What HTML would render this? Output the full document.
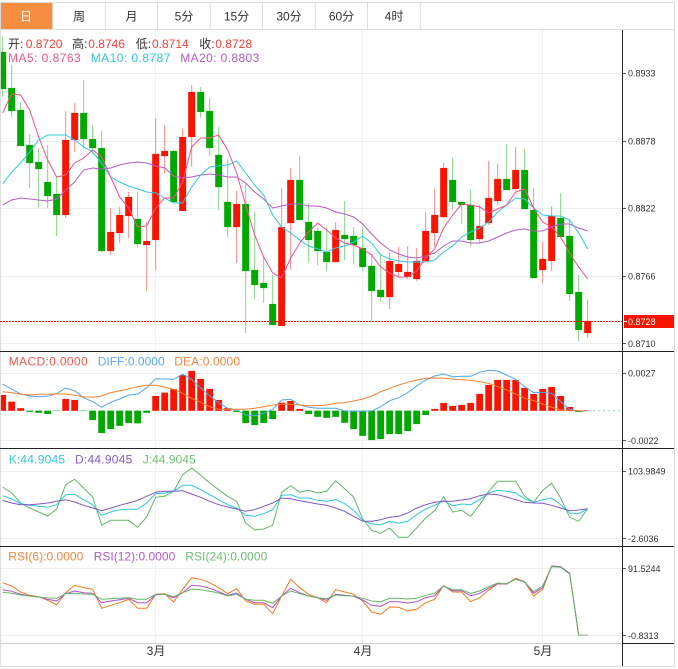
<!DOCTYPE html>
<html><head><meta charset="utf-8">
<style>
html,body{margin:0;padding:0;background:#fff;width:678px;height:669px;overflow:hidden}
svg{display:block;position:absolute;left:0;top:0}
text{font-family:"Liberation Sans","Noto Sans CJK SC",sans-serif}
.l{font-size:12px}.a{font-size:9px;fill:#333}.t{font-size:12px;fill:#333;text-anchor:middle}
</style></head><body>
<svg id="s" width="678" height="669" viewBox="0 0 678 669" xmlns="http://www.w3.org/2000/svg">
<rect x="0" y="2" width="52.5" height="27" fill="#f58e40"/>
<path d="M0 2.5H674.5V666.5H0.5V2M0 29.5H674.5M52.7 3V29M105.3 3V29M157.5 3V29M210.3 3V29M262.5 3V29M315.3 3V29M367.5 3V29M420.3 3V29" fill="none" stroke="#dcdcdc" stroke-width="1"/>
<text class="t" x="26" y="20.5" style="fill:#fff">日</text>
<text class="t" x="79" y="20.5">周</text>
<text class="t" x="131.5" y="20.5">月</text>
<text class="t" x="184" y="20.5">5分</text>
<text class="t" x="236.5" y="20.5">15分</text>
<text class="t" x="289" y="20.5">30分</text>
<text class="t" x="341.5" y="20.5">60分</text>
<text class="t" x="394" y="20.5">4时</text>
<path d="M1 73.5H622M1 141.5H622M1 208.5H622M1 276.5H622M1 343.5H622M1 373.5H622M1 440.5H622M1 471.5H622M1 538.5H622M1 568.5H622M1 635.5H622" stroke="#e9eef2" stroke-width="1" fill="none"/>
<path d="M155.5 30V643M362.5 30V643M542.5 30V643" stroke="#eef2f5" stroke-width="1" fill="none"/>
<g id="g"></g>
<path d="M0 321.5H622" stroke="#f71400" stroke-width="1" stroke-dasharray="2 1" fill="none"/>
<path d="M1 643.5H622" stroke="#cfcfcf" stroke-width="1" fill="none"/>
<path d="M0 351.5H674M0 448.5H674M0 546.5H674M622 643.5H674M622.5 30V666" stroke="#222" stroke-width="1" fill="none"/>
<path d="M623 73.5H626M623 141.5H626M623 208.5H626M623 276.5H626M623 343.5H626M623 373.5H626M623 440.5H626M623 471.5H626M623 538.5H626M623 568.5H626M623 635.5H626" stroke="#555" stroke-width="1" fill="none"/>
<rect x="624" y="315" width="50" height="13" fill="#f71400"/>
<path d="M624 321.5H627" stroke="#fff" stroke-width="1"/>
<text class="a" x="628" y="76.5">0.8933</text>
<text class="a" x="628" y="144.5">0.8878</text>
<text class="a" x="628" y="211.5">0.8822</text>
<text class="a" x="628" y="279.5">0.8766</text>
<text class="a" x="628" y="325" style="fill:#fff">0.8728</text>
<text class="a" x="628" y="347">0.8710</text>
<text class="a" x="628" y="376.5">0.0027</text>
<text class="a" x="628" y="444">-0.0022</text>
<text class="a" x="628" y="474.5">103.9849</text>
<text class="a" x="628" y="542">-2.6036</text>
<text class="a" x="628" y="572">91.5244</text>
<text class="a" x="628" y="639">-0.8313</text>
<text class="l" x="8" y="48" fill="#333">开:</text><text class="l" x="25.7" y="48" fill="#f0403a">0.8720</text>
<text class="l" x="72" y="48" fill="#333">高:</text><text class="l" x="88.3" y="48" fill="#f0403a">0.8746</text>
<text class="l" x="135.7" y="48" fill="#333">低:</text><text class="l" x="152" y="48" fill="#f0403a">0.8714</text>
<text class="l" x="199.3" y="48" fill="#333">收:</text><text class="l" x="215.3" y="48" fill="#f0403a">0.8728</text>
<text class="l" x="8" y="62" fill="#f0568f" textLength="72.7">MA5: 0.8763</text>
<text class="l" x="90.7" y="62" fill="#2ec8dc" textLength="79.7">MA10: 0.8787</text>
<text class="l" x="180.3" y="62" fill="#b05cc8" textLength="79">MA20: 0.8803</text>
<text class="l" x="8.7" y="365.5" fill="#f4574d" textLength="79">MACD:0.0000</text>
<text class="l" x="97.7" y="365.5" fill="#5aa9ee" textLength="67">DIFF:0.0000</text>
<text class="l" x="174.3" y="365.5" fill="#f5843c" textLength="65.7">DEA:0.0000</text>
<text class="l" x="8.7" y="463.5" fill="#2ec8dc" textLength="56.3">K:44.9045</text>
<text class="l" x="75" y="463.5" fill="#8a5cc8" textLength="57.3">D:44.9045</text>
<text class="l" x="142.7" y="463.5" fill="#6fbf73" textLength="53">J:44.9045</text>
<text class="l" x="8.3" y="560.5" fill="#f5843c" textLength="75">RSI(6):0.0000</text>
<text class="l" x="93.7" y="560.5" fill="#b05cc8" textLength="81.6">RSI(12):0.0000</text>
<text class="l" x="185.3" y="560.5" fill="#6fbf73" textLength="82">RSI(24):0.0000</text>
<text class="t" x="156" y="655">3月</text>
<text class="t" x="363" y="655">4月</text>
<text class="t" x="543" y="655">5月</text>
</svg>
<script>
var C=[[36,52,89,97,0],[65,88,111,117,0],[102,110,146,146,0],[134,145,163,188,0],[148,162,169,207,0],[145,182,196,208,0],[177,194,215,236,0],[111,140,215,218,1],[103,113,140,152,1],[80,113,139,148,0],[125,139,148,155,0],[131,148,251,252,0],[208,232,251,255,1],[207,215,233,243,1],[192,197,216,238,1],[192,219,244,248,0],[222,241,245,291,1],[118,154,240,270,1],[125,151,156,173,1],[150,151,202,202,0],[129,137,211,211,1],[85,92,137,167,1],[87,92,112,118,0],[98,111,148,156,0],[127,155,187,210,0],[159,202,227,237,0],[191,204,227,263,1],[183,204,271,333,0],[212,270,285,299,0],[257,283,288,303,0],[275,304,325,325,0],[188,227,326,326,1],[168,180,223,270,1],[156,180,220,220,0],[203,222,240,263,0],[228,231,251,265,0],[227,252,262,271,0],[222,230,262,262,1],[201,235,239,260,0],[227,236,245,264,0],[227,248,267,271,0],[254,266,291,321,0],[253,290,297,302,0],[253,261,297,309,1],[247,264,272,277,1],[246,272,277,279,1],[248,261,279,281,1],[212,231,261,261,1],[189,215,233,247,1],[163,168,217,218,1],[158,180,202,210,0],[202,202,205,224,0],[190,205,240,246,0],[205,226,239,243,1],[161,198,223,225,1],[164,179,201,205,1],[144,179,190,190,0],[147,170,189,191,1],[149,170,209,209,0],[188,210,278,278,0],[242,259,270,283,1],[206,216,261,271,1],[193,218,237,237,0],[219,236,294,301,0],[275,292,330,341,0],[300,321,333,338,1]];
var ma5=[113,94,95,110,137,160,177,175,163,158,150,157,177,197,208,227,226,208,198,198,182,147,138,138,135,150,173,205,235,257,273,278,258,243,232,223,230,238,243,245,249,255,267,273,277,277,271,258,249,228,215,204,205,207,213,209,205,192,189,208,222,227,237,253,267,279];
var ma10=[184,172,163,152,140,135,135,135,140,147,152,163,177,182,186,189,192,193,198,203,203,187,175,167,166,165,161,173,185,195,215,227,233,240,246,249,252,248,246,242,236,243,255,259,261,262,262,262,260,252,246,237,232,228,222,212,205,198,199,208,215,216,216,220,233,249];
var ma20=[205,200,198,199,200,201,199,190,182,170,168,169,168,165,163,162,163,166,168,176,178,177,175,174,175,177,177,183,192,199,208,206,204,204,206,206,208,212,214,217,224,234,243,250,254,257,258,256,253,246,241,241,243,243,241,237,233,230,229,231,231,227,224,224,228,231];
var bars=[395,401.7,408.3,411.7,412.7,414,411,399,400,411,420,433,429,425.7,423,423.3,412.7,396,392.7,389.3,375,371,379,389,400,408,412,423,425,423,419,402.7,401,409,414,416.7,417.7,416.7,422.7,429,435.7,440,439,434,434,431,424,415,409,403,406,405,403,394,385,380,380,380,388,394,389,387,396,407,412,410.7];
var diff=[384,389,394,396,396.7,396.3,393.7,388,390.7,397.7,401.7,407.3,402.3,399,395,394,387.7,378.7,379,379.3,374.3,379.3,387.7,395.7,402.7,408.3,410,415,415.7,413.3,409.3,400,399.3,405,407.3,408.3,408.3,408.3,411,411.3,411.3,411,406.7,400.7,397.7,392.7,386,380,376,374,376.7,376.3,376.3,372.3,370.3,371,375,379.3,386.7,392.7,392.3,393.3,401.7,409.3,411.3,410.7];
var dea=[391.7,392.7,394.3,395,394.3,394.3,394,394,395.3,396.7,397.3,396,392.7,390.7,389,386.7,385.3,385.3,387.3,389.3,393.3,398.3,402.3,406.7,409.3,409.3,409.3,409.3,408.3,406.7,405,404.3,404.3,405,405.7,405.7,405,403.3,402.7,401,399,396,391.7,388.3,385,382.3,380,378.3,378,378.3,379,379.7,380.3,381.7,383.3,386.7,390,394,398.3,400.7,404,407.3,410,410.7,410.7,410.7];
var J=[487,493,503,508,512,516,509,484.7,479.3,488,497,525.3,520.3,520.3,520.3,527.3,517,497.3,496.3,491.3,474.7,468,475.3,483,489.7,496.3,501.3,523,530,529,525.3,492.3,485.7,492.3,490.3,493,491.3,480.7,488.7,497,519,530.3,533.3,528,537.3,537.3,528,518,510.7,496.7,512,510.3,516.3,504.7,491.3,481.3,481.3,481.3,496.3,502.3,490.3,483.3,498,517.3,521.3,508.7];
var K=[495.7,499,503.7,505.3,506.3,507.3,504.7,494.7,494.3,499.7,504.7,515.3,512,509.7,509.3,509.3,503,493.7,493,491.3,485.3,485.3,489.7,494.7,499.7,504.7,508,515.3,516.3,513.7,509.7,495.3,494.7,498,498,500.3,501.3,499.7,503.7,510.3,520.3,524,524.7,521.3,523.3,521.3,514.7,509,505.3,500.7,505.7,504,504.7,499.7,493,490.3,491.3,493,498.7,502.3,499.7,498,504.7,513,513.7,508.7];
var D=[500.3,503,504.7,504.7,504,503,501.3,499.7,502,505.3,508,510.7,508,505.3,503,500.3,496.3,492.3,491.3,491.3,490.7,494,497.3,501.3,504.7,507,509,511.3,509.7,506.3,503,498,498.7,500.7,502.3,504,505.3,508,511.3,516.3,521.3,521.3,519.7,517.3,516.3,513,508,504.7,502.3,501.3,501.3,500,498.7,495.7,494,494.7,497,499.7,502.3,503,503.3,505.3,508,510.7,510,508.7];
var R6=[582.7,586,592,595.3,596.7,600.3,604.7,592.7,585.3,587.7,589.3,608.3,605.3,602.7,599.3,608.3,608.3,594.3,593.7,602,589.3,577.7,579.3,582.7,587.7,593.7,588.7,601,604.3,604.3,613.7,596,579.3,587.7,594.3,597.7,602.7,589.7,592,594.3,601,612,614.3,607,607.3,611,609.3,602.7,599.3,585.3,592,592,601.7,597.7,590.3,583.7,584.3,578.3,581.7,596,589.3,566,566.7,573.3,635,635];
var R12=[589.7,591.3,594.3,596,597,599.3,601,593.7,591,592.7,593.3,602.7,601,599.7,598.3,602.7,602.7,594.7,594.3,598,592.7,585.3,586,588.3,591.7,595.3,593,599.3,602.7,602.7,607.7,596,588.3,592.7,596,597.7,600.3,594.3,595.3,596.3,600,605.3,606.3,601.7,601.7,603,601.7,597.7,595.7,586,590.7,590.7,595.7,593.3,588.3,583.7,583.7,579,582,593.3,587.7,566,566.7,573.3,635,635];
var R24=[592.3,593.3,595,596,597,598,598.3,593.7,593.3,594,594.3,599.3,598.7,598.3,597.7,599.3,599.3,594.3,594.3,596.7,592.7,589.3,589.7,591.3,593,596,594.3,599.3,600.3,600.3,603.3,596,591,593.7,596,597.7,598.7,595,595.7,596,598.3,601,601.7,598.3,598.3,599,598.3,595.3,593.3,586,589.7,589.7,593.3,591,586.7,583,583.7,579.3,582,591.7,586,566.7,567.3,574,635,635];
function X(i){return 2.67+9*i}
var h='',rw='',gw='',rb='',gb='',mr='',mg='';
C.forEach(function(c,i){var x=X(i),w='M'+x+' '+c[0]+'V'+c[3],b='M'+Math.max(x-3.4,1)+' '+c[1]+'H'+(x+3.4)+'V'+c[2]+'H'+Math.max(x-3.4,1)+'Z';
if(c[4]){rw+=w;rb+=b}else{gw+=w;gb+=b}});
bars.forEach(function(y,i){var x=X(i),z=410.7,b='M'+Math.max(x-3.3,1)+' '+y+'H'+(x+3.3)+'V'+z+'H'+Math.max(x-3.3,1)+'Z';if(y<=z)mr+=b;else mg+=b});
h+='<path d="'+rw+'" stroke="#f98a80" fill="none"/><path d="'+gw+'" stroke="#84d684" fill="none"/>';
h+='<path d="'+rb+'" fill="#f71400" stroke="#f71400" stroke-opacity=".3" stroke-width=".6"/><path d="'+gb+'" fill="#00a800" stroke="#00a800" stroke-opacity=".3" stroke-width=".6"/>';
h+='<path d="'+mr+'" fill="#f71400" stroke="#f71400" stroke-opacity=".3" stroke-width=".6"/><path d="'+mg+'" fill="#00a800" stroke="#00a800" stroke-opacity=".3" stroke-width=".6"/>';
function L(a,c){return '<polyline fill="none" stroke="'+c+'" stroke-width="1" points="'+a.map(function(y,i){return X(i)+','+y}).join(' ')+'"/>'}
h+=L(ma20,'#b45cc8')+L(ma10,'#30c8dc')+L(ma5,'#f0508c');
h+='<path d="M588 410.7H622" stroke="#8ccdf0" stroke-dasharray="2 3" fill="none"/>';
h+=L(diff,'#4fa6ee')+L(dea,'#f5812e');
h+=L(J,'#62b866')+L(K,'#2ec8dc')+L(D,'#8456c8');
h+=L(R6,'#f5781e')+L(R12,'#b050c8')+L(R24,'#62b866');
h+='<path d="M578.7 635.2H587.7" stroke="#b8b8a8" stroke-width="1.2"/>';
document.getElementById('g').innerHTML=h;
</script>
</body></html>
